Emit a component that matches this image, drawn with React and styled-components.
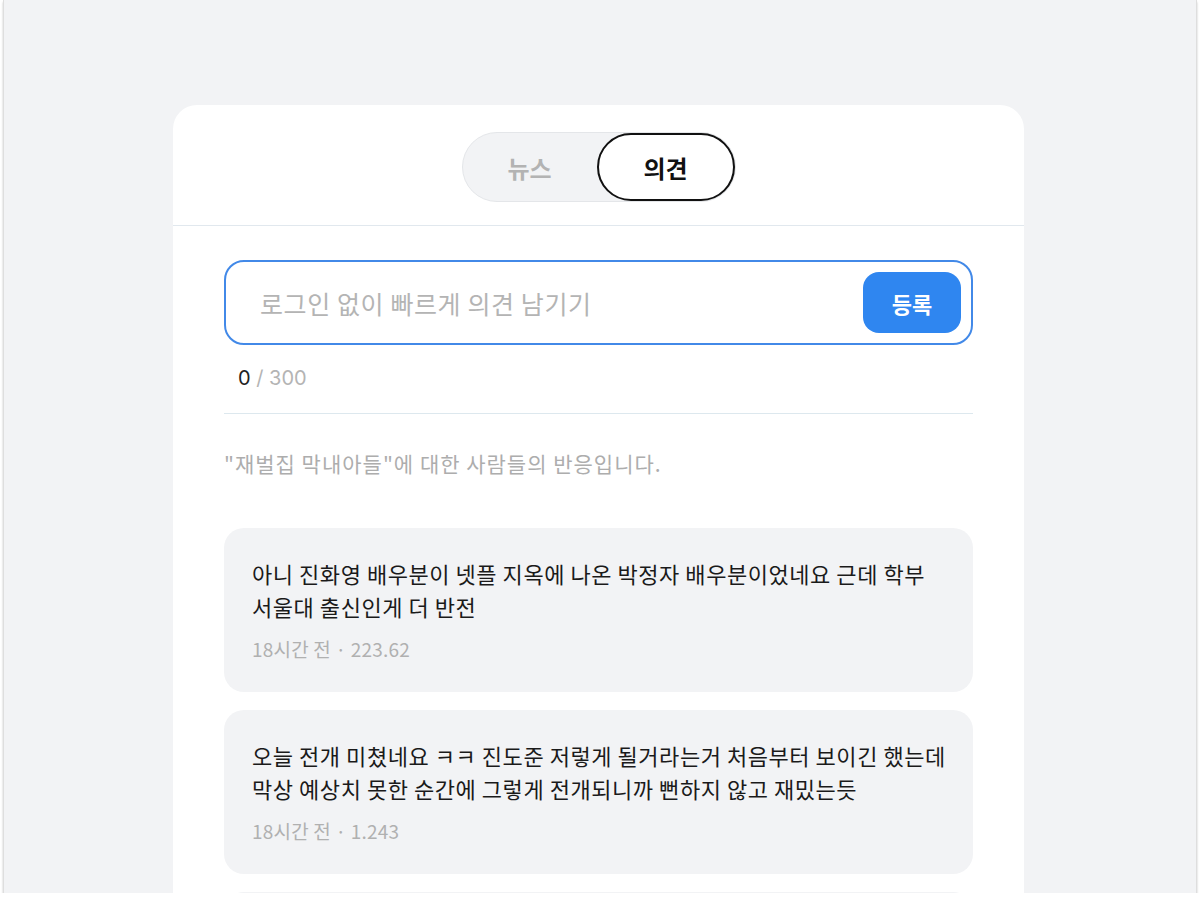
import React from "react";
import styled, { createGlobalStyle } from "styled-components";

const Global = createGlobalStyle`
  html, body { margin: 0; padding: 0; background: #ffffff; }
  body { font-family: "Noto Sans CJK KR", "Noto Sans", sans-serif; word-break: keep-all; }
  * { box-sizing: border-box; }
`;

const Frame = styled.div`
  margin-left: 3px;
  width: 1194px;
  height: 893px;
  background: #f2f3f5;
  border-left: 1px solid #dedede;
  border-right: 1px solid #dedede;
  box-shadow: 0 2px 2px rgba(0, 0, 0, 0.22);
  overflow: hidden;
  display: flex;
  justify-content: center;
  align-items: flex-start;
  padding-top: 105px;
  padding-right: 3px;
`;

const Card = styled.div`
  width: 851px;
  min-height: 900px;
  background: #ffffff;
  border-radius: 24px 24px 0 0;
  display: flex;
  flex-direction: column;
  flex-shrink: 0;
`;

const Header = styled.div`
  height: 121px;
  flex-shrink: 0;
  border-bottom: 1px solid #e1e8ee;
  display: flex;
  justify-content: center;
  padding-top: 27px;
`;

const Segmented = styled.div`
  width: 274px;
  height: 70px;
  border-radius: 35px;
  background: #f2f3f5;
  border: 1px solid #e4e6e9;
  display: flex;
  align-items: center;
  padding: 1px 0;
`;

const SegButton = styled.div`
  flex: 1;
  height: 68px;
  border-radius: 34px;
  display: flex;
  align-items: center;
  justify-content: center;
  font-size: 24px;
  font-weight: 700;
  color: ${(p) => (p.$active ? "#111111" : "#b3b3b3")};
  background: ${(p) => (p.$active ? "#ffffff" : "transparent")};
  border: ${(p) => (p.$active ? "2px solid #111111" : "none")};
`;

const Body = styled.div`
  padding: 34px 51px 0 51px;
  display: flex;
  flex-direction: column;
`;

const InputBox = styled.div`
  height: 85px;
  flex-shrink: 0;
  border: 2px solid #4289e8;
  border-radius: 20px;
  display: flex;
  align-items: center;
  justify-content: space-between;
  padding: 0 10px 0 34px;
`;

const Placeholder = styled.span`
  font-size: 25px;
  color: #b4b4b4;
  letter-spacing: 0.6px;
`;

const SubmitButton = styled.button`
  width: 98px;
  height: 61px;
  border: none;
  border-radius: 16px;
  background: #2f86f0;
  color: #ffffff;
  font-family: inherit;
  font-size: 22px;
  font-weight: 700;
`;

const Counter = styled.div`
  padding: 21px 0 0 14px;
  height: 69px;
  flex-shrink: 0;
  font-size: 20px;
  color: #b4b4b4;
  border-bottom: 1px solid #dde8ee;
  font-family: "Inter", "Noto Sans CJK KR", sans-serif;
`;

const Count = styled.span`
  color: #222222;
`;

const Caption = styled.div`
  margin-top: 35px;
  font-size: 21px;
  color: #adadad;
  letter-spacing: 1px;
  line-height: 29px;
`;

const List = styled.div`
  margin-top: 50px;
  display: flex;
  flex-direction: column;
  gap: 18px;
`;

const Comment = styled.div`
  background: #f2f3f5;
  border-radius: 20px;
  padding: 29px 20px 0 28px;
  height: 164px;
  flex-shrink: 0;
`;

const CommentText = styled.div`
  font-size: 22px;
  line-height: 33px;
  color: #1a1a1a;
  letter-spacing: 0.55px;
  word-break: keep-all;
`;

const Meta = styled.div`
  margin-top: 12px;
  font-size: 19px;
  color: #b0b0b0;
  letter-spacing: 0.2px;
`;

const comments = [
  {
    text: "아니 진화영 배우분이 넷플 지옥에 나온 박정자 배우분이었네요 근데 학부 서울대 출신인게 더 반전",
    meta: "18시간 전 · 223.62",
  },
  {
    text: "오늘 전개 미쳤네요 ㅋㅋ 진도준 저렇게 될거라는거 처음부터 보이긴 했는데 막상 예상치 못한 순간에 그렇게 전개되니까 뻔하지 않고 재밌는듯",
    meta: "18시간 전 · 1.243",
  },
  { text: "", meta: "" },
];

export default function App() {
  return (
    <>
      <Global />
      <Frame>
        <Card>
          <Header>
            <Segmented>
              <SegButton>뉴스</SegButton>
              <SegButton $active>의견</SegButton>
            </Segmented>
          </Header>
          <Body>
            <InputBox>
              <Placeholder>로그인 없이 빠르게 의견 남기기</Placeholder>
              <SubmitButton>등록</SubmitButton>
            </InputBox>
            <Counter>
              <Count>0</Count> / 300
            </Counter>
            <Caption>"재벌집 막내아들"에 대한 사람들의 반응입니다.</Caption>
            <List>
              {comments.map((c, i) => (
                <Comment key={i}>
                  <CommentText>{c.text}</CommentText>
                  {c.meta && <Meta>{c.meta}</Meta>}
                </Comment>
              ))}
            </List>
          </Body>
        </Card>
      </Frame>
    </>
  );
}
